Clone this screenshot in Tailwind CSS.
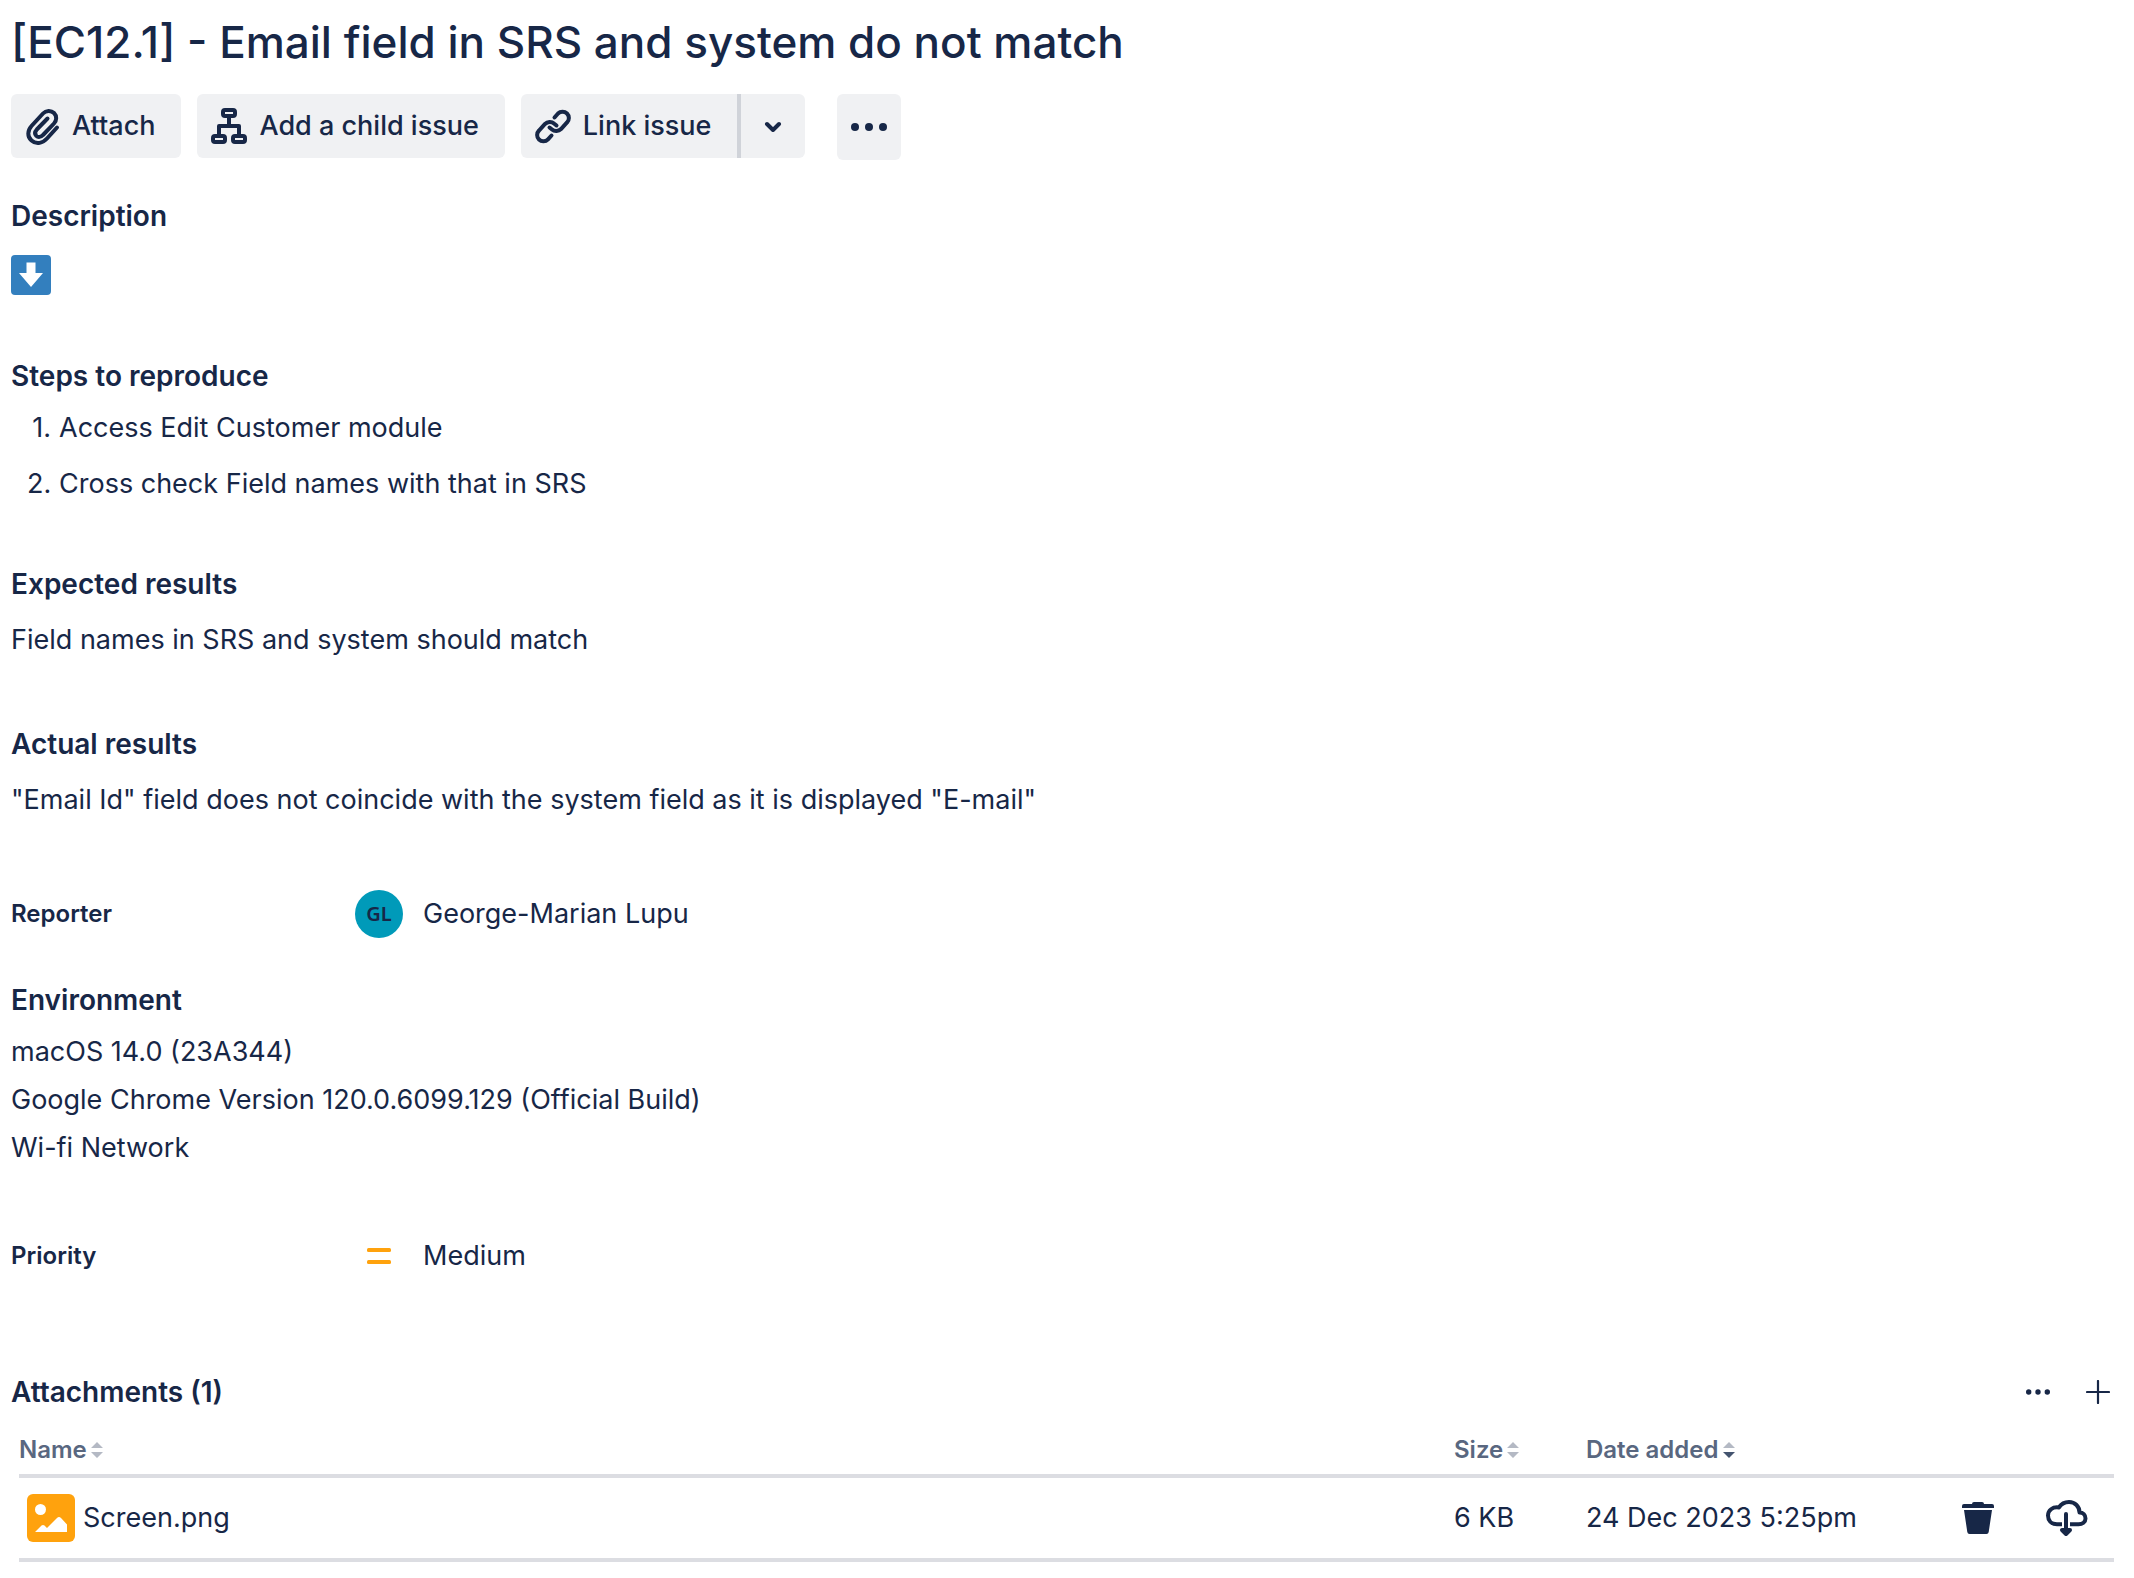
<!DOCTYPE html>
<html lang="en">
<head>
<meta charset="utf-8">
<title>[EC12.1] - Email field in SRS and system do not match</title>
<script src="https://cdn.jsdelivr.net/npm/@tailwindcss/browser@4"></script>
</head>
<body class="bg-white">
<main class="pt-[14px] pl-[11px] pr-5 pb-4 font-['Inter',sans-serif] text-[27px] leading-10 text-[#172747]">
  <h1 class="text-[44px] leading-[56px] font-medium">[EC12.1] - Email field in SRS and system do not match</h1>

  <div class="mt-6 flex items-start">
    <button type="button" class="flex h-16 items-center gap-[6px] rounded-[6px] bg-[#f0f1f3] pl-[7px] pr-[26px] font-medium">
      <svg class="size-12" viewBox="0 0 48 48" fill="none" stroke="currentColor" stroke-width="4" stroke-linecap="round" stroke-linejoin="round" aria-hidden="true"><path d="M39 25.500 29 36.500C25 41 18.500 43 13.500 38.500C9 34.500 9.500 28.500 13.500 24L25 11.500C28 8.200 33 8 36 11C39 14 38.800 18.500 36 21.500L25 33C23 35.200 20 35.500 18.300 33.800C16.600 32 17 29.500 18.800 27.500L29.500 16.500"/></svg>
      Attach
    </button>
    <button type="button" class="ml-4 flex h-16 items-center gap-[6px] rounded-[6px] bg-[#f0f1f3] pl-2 pr-[26px] font-medium">
      <svg class="size-12" viewBox="0 0 48 48" fill="none" stroke="currentColor" stroke-width="4" aria-hidden="true"><rect x="18" y="8" width="12" height="6" rx="2"/><rect x="8" y="34" width="12" height="6" rx="2"/><rect x="28" y="34" width="12" height="6" rx="2"/><path d="M24 14v10M14 34V24h20v10" stroke-linejoin="round"/></svg>
      Add a child issue
    </button>
    <div class="ml-4 flex">
      <button type="button" class="flex h-16 items-center gap-[6px] rounded-l-[6px] bg-[#f0f1f3] pl-2 pr-[26px] font-medium">
        <svg class="size-12" viewBox="0 0 48 48" fill="none" stroke="currentColor" stroke-width="4" stroke-linecap="round" aria-hidden="true"><path d="M25.500 15.500 29 11.500C31.500 9 35.500 9 38 11.500C40.500 14 40.500 18 38 20.500L32 27C29.500 29.500 25.500 29.700 23 27.500L20.500 25.500"/><path d="M22.500 33.500 19 37.300C16.500 39.900 12.500 40 10 37.500C7.500 35 7.500 31 10 28.500L16 22C18.500 19.500 22.500 19.300 25 21.500L27.500 23.500"/></svg>
        Link issue
      </button>
      <button type="button" aria-label="More link options" class="flex h-16 w-[68px] items-center justify-center rounded-r-[6px] border-l-4 border-[#d0d3d9] bg-[#f0f1f3]">
        <svg class="h-3 w-5" viewBox="0 0 20 12" fill="none" stroke="currentColor" stroke-width="4" stroke-linecap="round" stroke-linejoin="round" aria-hidden="true"><path d="M4 4l6 6 6-6"/></svg>
      </button>
    </div>
    <button type="button" aria-label="More actions" class="ml-8 flex h-[66px] w-16 items-center justify-center rounded-[6px] bg-[#f0f1f3]">
      <svg class="h-2 w-9" viewBox="0 0 36 8" fill="currentColor" aria-hidden="true"><circle cx="4" cy="4" r="4"/><circle cx="18" cy="4" r="4"/><circle cx="32" cy="4" r="4"/></svg>
    </button>
  </div>

  <section class="mt-9">
    <h2 class="text-[28px] font-semibold">Description</h2>
    <svg class="mt-[19px] size-10" viewBox="0 0 40 40" role="img" aria-label="Down arrow"><rect width="40" height="40" rx="4" fill="#337fbe"/><path d="M15.500 7.500h9V18H32L20 32 8 18h7.500z" fill="#fff"/></svg>
  </section>

  <section class="mt-[61px]">
    <h2 class="text-[28px] font-semibold">Steps to reproduce</h2>
    <ol class="mt-3 flex flex-col gap-4 pl-4">
      <li class="flex"><span class="w-8 pr-2 text-right">1.</span>Access Edit Customer module</li>
      <li class="flex"><span class="w-8 pr-2 text-right">2.</span>Cross check Field names with that in SRS</li>
    </ol>
  </section>

  <section class="mt-[60px]">
    <h2 class="text-[28px] font-semibold">Expected results</h2>
    <p class="mt-4">Field names in SRS and system should match</p>
  </section>

  <section class="mt-16">
    <h2 class="text-[28px] font-semibold">Actual results</h2>
    <p class="mt-4">"Email Id" field does not coincide with the system field as it is displayed "E-mail"</p>
  </section>

  <div class="mt-[70px] flex h-12 items-center">
    <h2 class="w-[344px] text-[24px] font-semibold">Reporter</h2>
    <span class="flex size-12 items-center justify-center rounded-full bg-[#009ab9] font-['Noto_Sans',sans-serif] text-[20px] font-semibold">GL</span>
    <span class="ml-5">George-Marian Lupu</span>
  </div>

  <section class="mt-[42px]">
    <h2 class="text-[28px] font-semibold">Environment</h2>
    <p class="mt-2 leading-[48px]">macOS 14.0 (23A344)<br>Google Chrome Version 120.0.6099.129 (Official Build)<br>Wi-fi Network</p>
  </section>

  <div class="mt-[60px] flex h-12 items-center">
    <h2 class="w-[344px] text-[24px] font-semibold">Priority</h2>
    <svg class="size-12" viewBox="0 0 48 48" fill="#ffa20d" aria-hidden="true"><rect x="12" y="16" width="24" height="4" rx="1.500"/><rect x="12" y="28" width="24" height="4" rx="1.500"/></svg>
    <span class="ml-5">Medium</span>
  </div>

  <section class="mt-[92px]">
    <div class="flex items-center justify-between">
      <h2 class="text-[28px] font-semibold">Attachments (1)</h2>
      <div class="mr-1 flex items-center gap-9">
        <button type="button" aria-label="Attachment options"><svg class="size-6" viewBox="0 0 24 24" fill="currentColor" aria-hidden="true"><circle cx="2.700" cy="12" r="2.700"/><circle cx="12" cy="12" r="2.700"/><circle cx="21.300" cy="12" r="2.700"/></svg></button>
        <button type="button" aria-label="Add attachment"><svg class="size-6" viewBox="0 0 24 24" fill="none" stroke="currentColor" stroke-width="2.200" stroke-linecap="round" aria-hidden="true"><path d="M12 1v22M1 12h22"/></svg></button>
      </div>
    </div>
    <div class="pl-2">
      <table class="w-full table-fixed border-separate border-spacing-0 text-left">
        <colgroup><col><col class="w-[132px]"><col class="w-[348px]"><col class="w-[180px]"></colgroup>
        <thead class="text-[24px] leading-8 text-[#596780]">
          <tr class="h-[66px]">
            <th class="border-b-4 border-[#dcdde2] p-0 pt-[14px] font-semibold" aria-sort="none"><span class="flex items-center gap-1">Name<svg class="h-4 w-3" viewBox="0 0 12 16" fill="#b4b9c4" aria-hidden="true"><path d="M6 0l6 6H0zM6 16l6-6H0z"/></svg></span></th>
            <th class="border-b-4 border-[#dcdde2] p-0 pt-[14px] font-semibold" aria-sort="none"><span class="flex items-center gap-1">Size<svg class="h-4 w-3" viewBox="0 0 12 16" fill="#b4b9c4" aria-hidden="true"><path d="M6 0l6 6H0zM6 16l6-6H0z"/></svg></span></th>
            <th class="border-b-4 border-[#dcdde2] p-0 pt-[14px] font-semibold" aria-sort="descending"><span class="flex items-center gap-1">Date added<svg class="h-4 w-3" viewBox="0 0 12 16" aria-hidden="true"><path d="M6 0l6 6H0z" fill="#b4b9c4"/><path d="M6 16l6-6H0z" fill="#44546f"/></svg></span></th>
            <th class="border-b-4 border-[#dcdde2] p-0" aria-label="Actions"></th>
          </tr>
        </thead>
        <tbody>
          <tr class="h-[84px]">
            <td class="border-b-4 border-[#dcdde2] p-0 pl-2"><span class="flex items-center gap-2"><svg class="size-12" viewBox="0 0 48 48" aria-hidden="true"><rect width="48" height="48" rx="6" fill="#ffa20d"/><circle cx="13.500" cy="15.500" r="5.500" fill="#fff"/><path d="M8 38l6.500-6.500q1.500-1.200 3 0L20 34l10-10q2-2 4 0l6 6.500V38z" fill="#fff"/></svg>Screen.png</span></td>
            <td class="border-b-4 border-[#dcdde2] p-0">6 KB</td>
            <td class="border-b-4 border-[#dcdde2] p-0">24 Dec 2023 5:25pm</td>
            <td class="border-b-4 border-[#dcdde2] p-0">
              <div class="flex justify-end gap-10 pr-6">
                <button type="button" aria-label="Delete attachment"><svg class="size-12" viewBox="0 0 48 48" fill="currentColor" aria-hidden="true"><path d="M8 14V12q0-2 2-2h8q0-2 2-2h8q2 0 2 2h8q2 0 2 2v2zM10 16h28l-3.300 22q-.3 2-2.200 2h-17q-1.900 0-2.200-2z"/></svg></button>
                <button type="button" aria-label="Download attachment"><svg class="size-12" viewBox="0 0 48 48" fill="none" stroke="currentColor" stroke-width="4" stroke-linecap="butt" stroke-linejoin="round" aria-hidden="true"><path d="M20 30.200H15C9 30.200 6 26 6 21.500C6 16.500 10.500 12.500 17 13.500C19.500 9.500 23.500 8 27 8C33 8 37.500 12.500 37.500 18.500C41 18.500 43.500 21 43.500 24.500C43.500 28 40.500 30.200 36.500 30.200H28"/><path d="M24 20v15" stroke-linecap="round"/><path d="M20 36h8l-4 4z"/></svg></button>
              </div>
            </td>
          </tr>
        </tbody>
      </table>
    </div>
  </section>
</main>
</body>
</html>
